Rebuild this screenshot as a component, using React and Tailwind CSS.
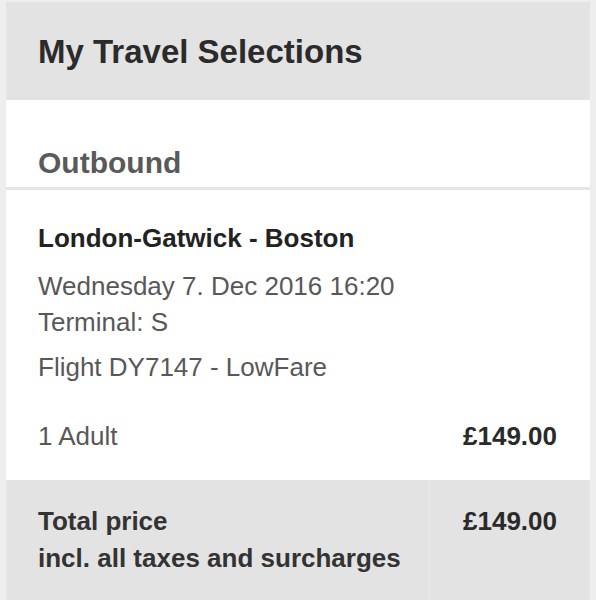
export default function App() {
  const font = { fontFamily: '"Liberation Sans", Arial, sans-serif' };
  return (
    <div className="w-[596px] h-[600px] overflow-hidden bg-[#eeeeee] pt-[2px] pl-[6px] pr-[6px]" style={font}>
      <div className="flex flex-col">
        <div className="h-[98px] bg-[#e3e3e3] pl-8 pt-[30px]">
          <h1 className="text-[33px] leading-[40px] font-bold text-[#2b2b2b]">My Travel Selections</h1>
        </div>
        <div className="h-[87px] bg-white pl-8 pt-[45px]">
          <h2 className="text-[30px] leading-[36px] font-bold text-[#5a5a5a]">Outbound</h2>
        </div>
        <div className="h-[3px] bg-[#e6e6e6]" />
        <div className="h-[290px] bg-white pl-8 pr-[33px] pt-[30px]">
          <div className="text-[26px] leading-[36px] font-bold text-[#222222]">London-Gatwick - Boston</div>
          <div className="mt-[12px] text-[26px] leading-[36px] text-[#585858]">Wednesday 7. Dec 2016 16:20</div>
          <div className="text-[26px] leading-[36px] text-[#585858]">Terminal: S</div>
          <div className="mt-[9px] text-[26px] leading-[36px] text-[#585858]">Flight DY7147 - LowFare</div>
          <div className="mt-[33px] flex justify-between text-[26px] leading-[36px]">
            <span className="text-[#585858]">1 Adult</span>
            <span className="font-bold text-[#2a2a2a]">£149.00</span>
          </div>
        </div>
        <div className="h-[120px] bg-[#e3e3e3] flex">
          <div className="w-[423px] pl-8 pt-[23px] text-[26px] leading-[37px] font-bold text-[#333333]">
            <div>Total price</div>
            <div>incl. all taxes and surcharges</div>
          </div>
          <div className="w-px bg-[#ebebeb]" />
          <div className="flex-1 pr-[33px] pt-[23px] text-right text-[26px] leading-[37px] font-bold text-[#2a2a2a]">£149.00</div>
        </div>
      </div>
    </div>
  );
}
